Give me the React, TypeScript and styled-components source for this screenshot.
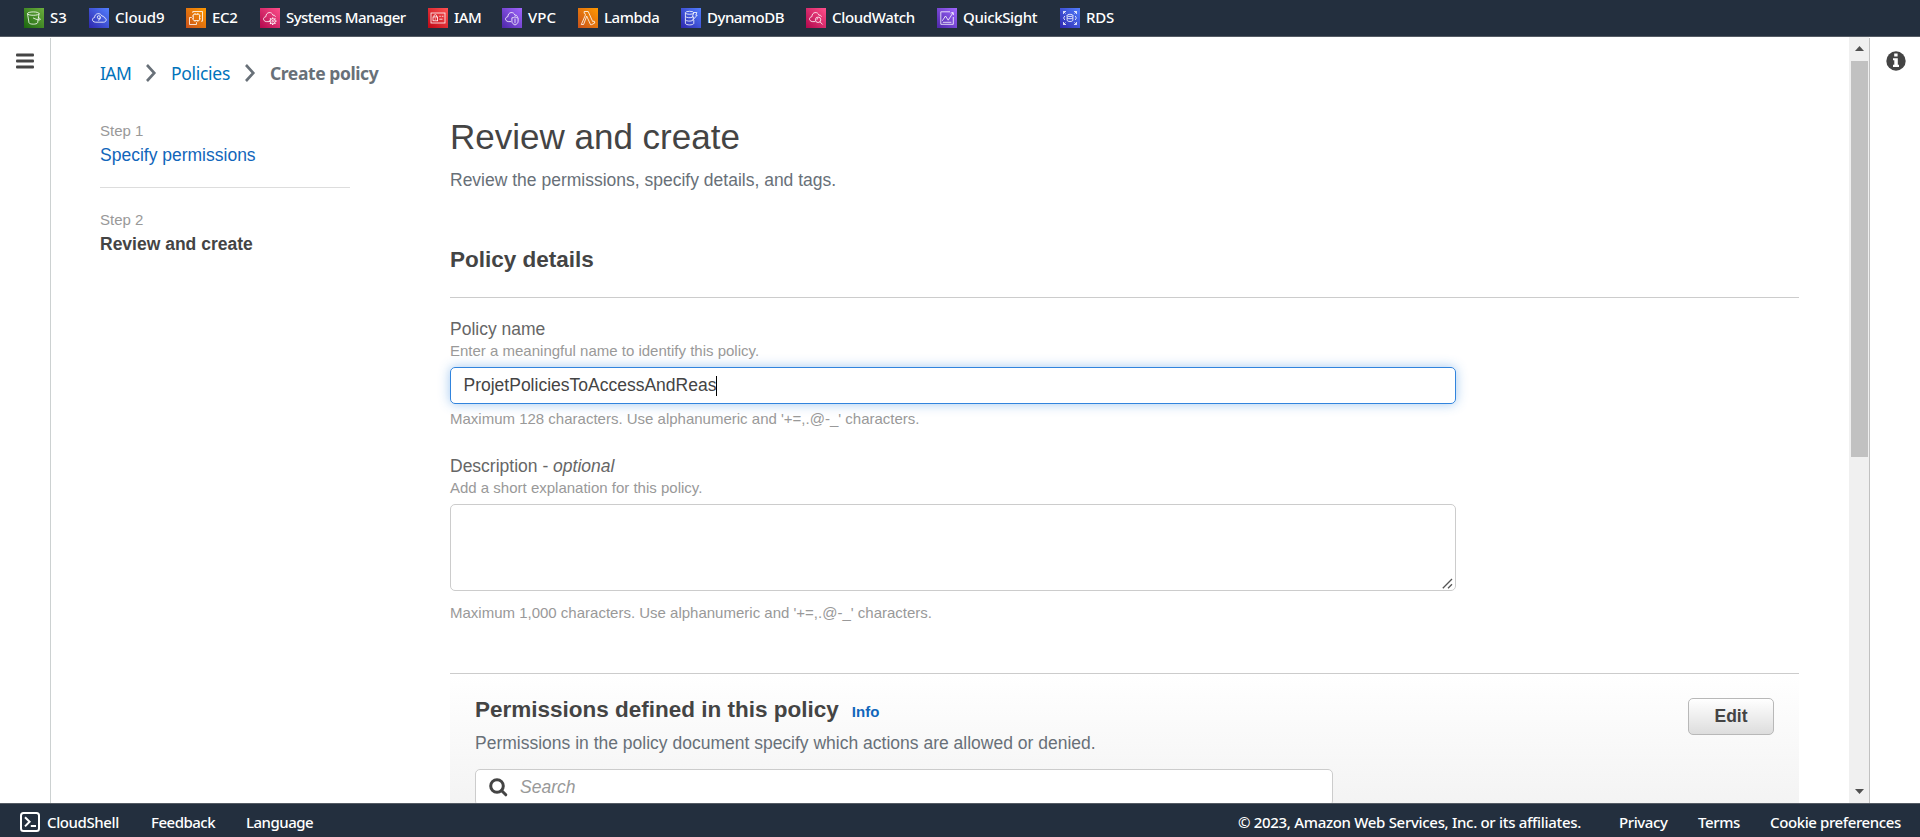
import React from "react";
import styled, { createGlobalStyle } from "styled-components";

const Global = createGlobalStyle`
  *{box-sizing:border-box}
  body{margin:0;background:#fff;font-family:"Liberation Sans",Arial,sans-serif;overflow:hidden}
`;
const ember = `"Noto Sans","Open Sans",sans-serif`;

const Page = styled.div`display:flex;flex-direction:column;height:837px;width:1920px;`;
const TopBar = styled.nav`
  height:37px;background:#232f3e;border-bottom:1px solid #545b64;display:flex;align-items:center;padding-left:24px;flex:none;
`;
const Service = styled.a<{ $w: number; $ls: number }>`
  display:flex;align-items:center;gap:6px;width:${p => p.$w}px;letter-spacing:${p => p.$ls}px;
  color:#fff;font:500 15px/20px ${ember};white-space:nowrap;flex:none;
`;
const ServiceName = styled.span`margin-top:-2px;`;
const Body = styled.div`display:flex;flex:1;min-height:0;`;
const LeftRail = styled.aside`width:51px;border-right:1px solid #ccd1d1;padding:15px 0 0 16px;flex:none;margin-top:1px;`;
const RightRail = styled.aside`width:51px;border-left:1px solid #c1c1c1;padding:13px 0 0 16px;flex:none;margin-top:1px;`;
const Scroller = styled.div`
  width:20px;background:#f0f0f0;flex:none;display:flex;flex-direction:column;justify-content:space-between;padding:9px 0 9px 6px;position:relative;
`;
const Thumb = styled.div`position:absolute;left:2px;top:24px;width:17px;height:396px;background:#c1c1c1;`;
const Main = styled.main`flex:1;min-width:0;overflow:hidden;padding:21px 50px 0 49px;`;
const Crumbs = styled.div`
  display:flex;align-items:center;height:30px;font:400 17.5px/30px ${ember};white-space:nowrap;
`;
const Crumb = styled.span<{ $w: number; $ls: number; $current?: boolean }>`
  width:${p => p.$w}px;letter-spacing:${p => p.$ls}px;font-weight:${p => (p.$current ? 700 : 400)};
  color:${p => (p.$current ? "#687078" : "#0073bb")};
`;
const ChevronSvg = styled.svg`width:12px;height:18px;margin-right:14px;flex:none;`;
const Columns = styled.div`display:flex;`;
const Steps = styled.div`width:250px;margin:32px 100px 0 0;flex:none;`;
const Step = styled.div<{ $divided?: boolean }>`
  padding-bottom:${p => (p.$divided ? 19 : 0)}px;border-bottom:${p => (p.$divided ? "1px solid #ddd" : "0")};margin-bottom:21px;
`;
const StepNo = styled.div`font-size:15px;line-height:22px;color:#999;`;
const StepName = styled.div<{ $current?: boolean }>`
  font-size:17.5px;line-height:26px;white-space:nowrap;font-weight:${p => (p.$current ? 700 : 400)};color:${p => (p.$current ? "#444" : "#1166bb")};
`;
const Content = styled.div`flex:1;min-width:0;padding-top:27px;`;
const H1 = styled.h1`margin:0;font-size:35px;line-height:44px;font-weight:400;color:#444;`;
const Lead = styled.p<{ $top?: number }>`margin:${p => p.$top ?? 8}px 0 0;font-size:17.5px;line-height:26px;color:#687078;`;
const H2 = styled.h2`margin:0;font-size:22.5px;line-height:28px;font-weight:700;color:#444;`;
const DetailsHead = styled.div`margin-top:53px;padding-bottom:23px;border-bottom:1px solid #ccc;`;
const Field = styled.div<{ $top: number }>`width:1006px;margin-top:${p => p.$top}px;`;
const Label = styled.div`font-size:17.5px;line-height:24px;color:#666;`;
const Hint = styled.div<{ $top?: number }>`font-size:15px;line-height:20px;color:#999;margin-top:${p => p.$top || 0}px;`;
const Input = styled.div`
  height:37px;margin-top:6px;border:1px solid #3184dd;border-radius:5px;box-shadow:0 0 12px rgba(49,132,221,.45);
  display:flex;align-items:center;padding-left:12.5px;font-size:17.5px;color:#444;
`;
const Caret = styled.span`width:1px;height:20px;background:#000;`;
const Area = styled.div`
  height:87px;margin-top:6px;border:1px solid #ccc;border-radius:5px;display:flex;align-items:flex-end;justify-content:flex-end;padding:0 2px 1px 0;
`;
const Panel = styled.section`
  margin-top:50px;height:190px;border-top:1px solid #ccc;padding:22px 25px 0;background:linear-gradient(#fff,#eee);
`;
const PanelTop = styled.div`display:flex;justify-content:space-between;`;
const TitleRow = styled.div`display:flex;align-items:baseline;gap:13px;`;
const Info = styled.a`font-size:15px;font-weight:700;color:#1166bb;`;
const Button = styled.button`
  width:86px;height:37px;margin:2px 0 0;border:1px solid #b8b8b8;border-radius:5px;background:linear-gradient(#fff,#ddd);
  font:700 17.5px "Liberation Sans",sans-serif;color:#444;padding:0;
`;
const Search = styled.div`
  width:858px;height:37px;margin-top:13px;border:1px solid #ccc;border-radius:5px;background:#fff;display:flex;align-items:center;gap:12px;
  padding-left:13px;font-size:17.5px;font-style:italic;color:#999;
`;
const Footer = styled.footer`
  height:34px;background:#232f3e;border-top:1px solid #545b64;display:flex;align-items:center;flex:none;padding:2px 0 0 20px;
  color:#fff;font:500 15px/20px ${ember};white-space:nowrap;
`;
const FootItem = styled.span<{ $w: number; $ls: number }>`width:${p => p.$w}px;letter-spacing:${p => p.$ls}px;flex:none;`;
const ShellItem = styled.span`display:flex;gap:7px;width:131px;align-items:center;flex:none;letter-spacing:-.4px;`;
const ShellIcon = styled.svg`width:20px;height:20px;margin-top:1px;flex:none;`;
const Spacer = styled.span`flex:1;`;

const cloud = "M9.2 13.6H6.2C2.6 13 2.8 9 5.9 8.7 5.9 3.6 12 3.2 13 7.4c1-.5 2.2 0 2.4 1.4";

const glyphs: Record<string, React.ReactNode> = {
  S3: <>
    <ellipse cx="9.3" cy="5.6" rx="5.8" ry="1.7" />
    <path d="M3.5 5.6 5 14.8c.8 1.8 7.8 1.8 8.6 0l1.5-9.2M9 9.9c2.4 1.3 6.6 2.8 7.3 1.7.4-.7-1-1.7-2-2.2" />
  </>,
  Cloud9: <>
    <path d="M6.4 14.2C2.5 13.9 2.8 9.8 5.6 9.5 5.5 5.1 11.6 4.2 13 8.2c1.3-.4 2.2.3 2.3 1.5 2.8.5 2.4 4.3-.6 4.5z" />
    <circle cx="9.8" cy="9.2" r="1.5" /><path d="M11.3 9.2c.2 1.8-.6 3-2.2 3" />
  </>,
  EC2: <>
    <rect x="7.3" y="6.3" width="6.2" height="6.2" rx=".8" />
    <path d="M6.8 5V3.5h9.7v9.7H15M5.8 9.5H3.5v7h7v-2.3M9 5v1.3M11.8 5v1.3M9 12.5v1.3M11.8 12.5v1.3M6 8h1.3M6 10.8h1.3M13.5 8h1.3M13.5 10.8h1.3" />
  </>,
  "Systems Manager": <>
    <path d={cloud} /><circle cx="12.7" cy="13.2" r="2.5" /><circle cx="12.7" cy="13.2" r=".8" />
    <path strokeWidth="1.2" d="M12.7 9.4v1.3M12.7 15.7V17M8.9 13.2h1.3M15.2 13.2h1.3M10 10.5l.9.9M14.5 15l.9.9M15.4 10.5l-.9.9M10.9 15l-.9.9" />
  </>,
  IAM: <>
    <rect x="3" y="5" width="14" height="10" />
    <rect x="5" y="9" width="4.6" height="3.8" /><path d="M6 9V7.8c0-1.5 2.6-1.5 2.6 0V9M7.3 10.4v1.2M11.3 8.3h1.5M13.8 8.3h1.6M11.3 11.2h3.2" />
  </>,
  VPC: <>
    <path d={cloud} /><path d="M13 8.8c1 .8 2 1 3.1 1v3.4c0 2-1.4 3-3.1 3.8-1.7-.8-3.1-1.8-3.1-3.8V9.8c1.1 0 2.1-.2 3.1-1zM13 10.5v4.8" />
  </>,
  Lambda: <path d="M6.2 3.5h4l4.5 10.1 1.4-.6.7 2-3.1 1.6h-1.2L8.7 8.1 5.6 16.5H3.3l4.2-9.6-.7-1.6h-.6z" />,
  DynamoDB: <>
    <ellipse cx="8.6" cy="4.8" rx="4.2" ry="1.5" />
    <path d="M4.4 4.8v10.6c.5 2 7.9 2 8.4 0V12M4.4 8.2c.6 1.8 5.7 1.9 7.3.9M4.4 11.7c.6 1.7 5.6 1.8 7.4.7M12.8 4.5h3.1l-1.1 2.7h1.4l-4.4 4.9 1-3.2h-1.5z" />
  </>,
  CloudWatch: <>
    <path d={cloud} /><circle cx="12.1" cy="11.8" r="2.7" /><path d="m14 13.8 2.6 2.7M12.1 10.4a1.5 1.5 0 0 0-1.3 1.3" />
  </>,
  QuickSight: <path d="M13 3.8H3.8v12.5h12.5V9M5.3 12.8 8.5 8l2.7 4.2L15.9 5M13.5 5.1l2.7-.7.3 2.7M5.8 14.3h8.6" />,
  RDS: <>
    <ellipse cx="10" cy="7.4" rx="2.9" ry="1.1" />
    <path d="M7.1 7.4v5c.5 1.5 5.3 1.5 5.8 0v-5M7.1 9.9c1 1.1 4.8 1.1 5.8 0M3.5 6V3.5H6M3.5 3.5l2 2M14 3.5h2.5V6M16.5 3.5l-2 2M3.5 14v2.5H6M3.5 16.5l2-2M14 16.5h2.5V14M16.5 16.5l-2-2M4.8 8 3.6 10l1.2 2M15.2 8l1.2 2-1.2 2" />
  </>,
};

const services: [string, string, string, number, number][] = [
  ["S3", "#1b660f", "#6cae3e", 65, 0], ["Cloud9", "#2e27ad", "#527fff", 97, -0.1], ["EC2", "#c8511b", "#f90", 74, -0.3],
  ["Systems Manager", "#b0084d", "#ff4f8b", 168, -0.55], ["IAM", "#bd0816", "#ff5252", 74, -0.6], ["VPC", "#4d27a8", "#a166ff", 76, 0],
  ["Lambda", "#c8511b", "#f90", 103, -0.45], ["DynamoDB", "#2e27ad", "#527fff", 125, -0.5], ["CloudWatch", "#b0084d", "#ff4f8b", 131, -0.35],
  ["QuickSight", "#4d27a8", "#a166ff", 123, -0.35], ["RDS", "#2e27ad", "#527fff", 80, -0.2],
];

const Chevron = () => (
  <ChevronSvg viewBox="0 0 12 18" fill="none" stroke="#687078" strokeWidth="2.6"><path d="M2 1l7.3 8L2 17" /></ChevronSvg>
);

export default function App() {
  return (
    <Page>
      <Global />
      <TopBar>
        {services.map(([name, from, to, w, ls], i) => (
          <Service key={name} $w={w} $ls={ls}>
            <svg width="20" height="20" viewBox="0 0 20 20" fill="none" stroke="#fff" strokeWidth=".8">
              <defs>
                <linearGradient id={"tile" + i} x1="0" y1="1" x2="1" y2="0"><stop stopColor={from} /><stop offset="1" stopColor={to} /></linearGradient>
              </defs>
              <rect width="20" height="20" fill={`url(#tile${i})`} stroke="none" />
              {glyphs[name]}
            </svg>
            <ServiceName>{name}</ServiceName>
          </Service>
        ))}
      </TopBar>
      <Body>
        <LeftRail>
          <svg width="18" height="17" fill="#444">
            <rect y=".5" width="18" height="3" rx="1" /><rect y="6.5" width="18" height="3" rx="1" /><rect y="12.5" width="18" height="3" rx="1" />
          </svg>
        </LeftRail>
        <Main>
          <Crumbs>
            <Crumb $w={45} $ls={-0.6}>IAM</Crumb><Chevron />
            <Crumb $w={73} $ls={-0.3}>Policies</Crumb><Chevron />
            <Crumb $w={120} $ls={-0.42} $current>Create policy</Crumb>
          </Crumbs>
          <Columns>
            <Steps>
              <Step $divided><StepNo>Step 1</StepNo><StepName>Specify permissions</StepName></Step>
              <Step><StepNo>Step 2</StepNo><StepName $current>Review and create</StepName></Step>
            </Steps>
            <Content>
              <H1>Review and create</H1>
              <Lead>Review the permissions, specify details, and tags.</Lead>
              <DetailsHead><H2>Policy details</H2></DetailsHead>
              <Field $top={19}>
                <Label>Policy name</Label>
                <Hint>Enter a meaningful name to identify this policy.</Hint>
                <Input>ProjetPoliciesToAccessAndReas<Caret /></Input>
                <Hint $top={5}>Maximum 128 characters. Use alphanumeric and '+=,.@-_' characters.</Hint>
              </Field>
              <Field $top={25}>
                <Label>Description - <i>optional</i></Label>
                <Hint>Add a short explanation for this policy.</Hint>
                <Area>
                  <svg width="11" height="11" stroke="#555" strokeWidth="1.3"><path d="M.8 10.2 10 1M6 10.2 10 6.2" /></svg>
                </Area>
                <Hint $top={12}>Maximum 1,000 characters. Use alphanumeric and '+=,.@-_' characters.</Hint>
              </Field>
              <Panel>
                <PanelTop>
                  <div>
                    <TitleRow><H2>Permissions defined in this policy</H2><Info>Info</Info></TitleRow>
                    <Lead $top={6}>Permissions in the policy document specify which actions are allowed or denied.</Lead>
                  </div>
                  <Button>Edit</Button>
                </PanelTop>
                <Search>
                  <svg width="19" height="19" fill="none" stroke="#444" strokeWidth="3">
                    <circle cx="8" cy="8" r="6.3" /><path d="m12.5 12.5 4.3 4.3" strokeLinecap="round" />
                  </svg>
                  Search
                </Search>
              </Panel>
            </Content>
          </Columns>
        </Main>
        <Scroller>
          <svg width="9" height="5" fill="#505050"><path d="M4.5 0 9 5H0z" /></svg>
          <Thumb />
          <svg width="9" height="5" fill="#505050"><path d="M4.5 5 9 0H0z" /></svg>
        </Scroller>
        <RightRail>
          <svg width="20" height="20" viewBox="0 0 20 20">
            <circle cx="10" cy="10" r="9.7" fill="#444" />
            <path fill="#fff" d="M8.2 2.6h3.4v3H8.2zM7 7.2h4.8v6.5H13v2.2H7v-2.2h1.3V9.3H7z" />
          </svg>
        </RightRail>
      </Body>
      <Footer>
        <ShellItem>
          <ShellIcon viewBox="0 0 20 20" fill="none" stroke="#fff" strokeWidth="2">
            <rect x="1" y="1" width="18" height="18" rx="2.5" /><path d="m5 5.2 4.6 4.6L5 14.4M10.8 14h5.2" />
          </ShellIcon>
          CloudShell
        </ShellItem>
        <FootItem $w={95} $ls={-0.5}>Feedback</FootItem><FootItem $w={80} $ls={-0.5}>Language</FootItem>
        <Spacer />
        <FootItem $w={381} $ls={-0.31}>© 2023, Amazon Web Services, Inc. or its affiliates.</FootItem>
        <FootItem $w={79} $ls={-0.4}>Privacy</FootItem><FootItem $w={72} $ls={-0.4}>Terms</FootItem>
        <FootItem $w={150} $ls={-0.4}>Cookie preferences</FootItem>
      </Footer>
    </Page>
  );
}
